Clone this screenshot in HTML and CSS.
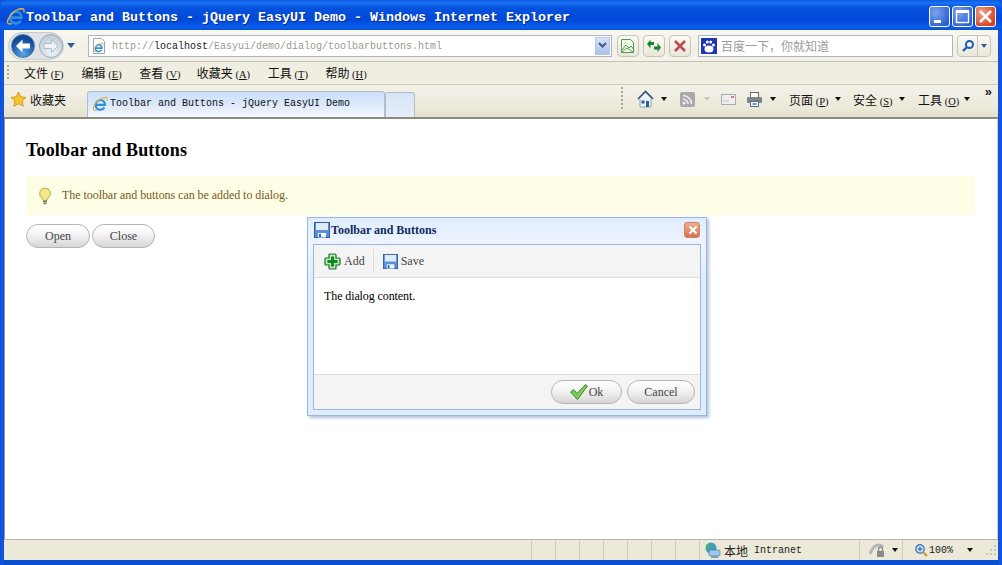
FILE: index.html
```html
<!DOCTYPE html>
<html lang="zh">
<head>
<meta charset="utf-8">
<title>Toolbar and Buttons - jQuery EasyUI Demo</title>
<link rel="stylesheet" href="styles.css">
</head>
<body>
<div class="window">
  <svg class="defs" width="0" height="0">
    <defs>
      <symbol id="ie" viewBox="0 0 18 18">
        <path d="M5 10h9.500c0-3.200-2.200-5.500-5-5.500S4 7 4 10.200s2.400 5.300 5.400 5.300c2 0 3.600-1 4.500-2.600" fill="none" stroke="#2f8fdc" stroke-width="2.500"/>
        <path d="M15.500 1.800C11.500 .8 4.500 5.500 2 11.500c-1.200 3.200-.5 5.500 3.500 4.200" fill="none" stroke="#d9b64a" stroke-width="1.300"/>
        <path d="M13 2.200c3-1.400 4.600-.6 4 2.800" fill="none" stroke="#d9b64a" stroke-width="1.300"/>
      </symbol>
      <symbol id="floppy" viewBox="0 0 16 16">
        <rect x="0.500" y="0.500" width="15" height="15" fill="#5b8fd6" stroke="#2b5ea8"/>
        <rect x="2" y="1" width="12" height="7" fill="#dfeafa"/>
        <rect x="4" y="11" width="8" height="4.500" fill="#f3f6fb"/>
        <rect x="5" y="12" width="2" height="3" fill="#2b5ea8"/>
      </symbol>
    </defs>
  </svg>

  <header class="titlebar">
    <svg class="ie-icon" width="19" height="19" viewBox="0 0 18 18"><use href="#ie"/></svg>
    <div class="title-text">Toolbar and Buttons - jQuery EasyUI Demo - Windows Internet Explorer</div>
    <div class="winbtns">
      <div class="winbtn"><svg width="21" height="21" viewBox="0 0 21 21"><rect x="5" y="14" width="7" height="3" fill="#fff"/></svg></div>
      <div class="winbtn"><svg width="21" height="21" viewBox="0 0 21 21"><rect x="4.500" y="5.500" width="12" height="11" fill="none" stroke="#fff" stroke-width="1.400"/><rect x="4" y="4" width="13" height="3" fill="#fff"/></svg></div>
      <div class="winbtn close"><svg width="21" height="21" viewBox="0 0 21 21"><path d="M5 5l11 11M16 5L5 16" stroke="#fff" stroke-width="2.600"/></svg></div>
    </div>
  </header>

  <div class="frame">
    <div class="addressbar">
      <div class="nav">
        <div class="capsule">
          <div class="nav-back"><svg width="20" height="20" viewBox="0 0 20 20"><path d="M3 10l6.500-6.500v4H17v5H9.500v4z" fill="#fff"/></svg></div>
          <div class="nav-fwd"><svg width="20" height="20" viewBox="0 0 20 20"><path d="M17 10l-6.500-6.500v4H3v5h7.500v4z" fill="#eef2f6" stroke="#9fb0c0" stroke-width=".8"/></svg></div>
        </div>
        <div class="nav-drop"></div>
      </div>
      <div class="urlbox">
        <svg class="page-icon" width="16" height="16" viewBox="0 0 16 16"><path d="M2.500 .5h8l3 3v12h-11z" fill="#fff" stroke="#9aa5b1"/><use href="#ie" x="2" y="4" width="11" height="11"/></svg>
        <div class="url">http://<b>localhost</b>/Easyui/demo/dialog/toolbarbuttons.html</div>
        <div class="url-drop"><svg width="9" height="7" viewBox="0 0 9 7"><path d="M1 1l3.500 3.500L8 1" fill="none" stroke="#3a5a8c" stroke-width="2"/></svg></div>
      </div>
      <div class="tool-btn"><svg width="16" height="16" viewBox="0 0 16 16"><path d="M1.500 1.500h9l3 3v10h-12z" fill="#f2fae9" stroke="#4f9a55"/><path d="M2 12l4-5 3 3 2-2 3 4M2 14l5-4 6 4" fill="none" stroke="#4f9a55"/></svg></div>
      <div class="tool-btn"><svg width="16" height="16" viewBox="0 0 16 16"><path d="M1 6l3.500-4.500v2.500H8v3H4.500v3.500z" fill="#1e7f2e"/><path d="M15 9.500l-3.500 4.500v-2.500H8v-3h3.500V5z" fill="#1e7f2e"/></svg></div>
      <div class="tool-btn"><svg width="14" height="14" viewBox="0 0 14 14"><path d="M2 2l10 10M12 2L2 12" stroke="#bd4a4a" stroke-width="2.600"/></svg></div>
      <div class="searchbox">
        <div class="paw"><svg width="14" height="14" viewBox="0 0 14 14"><ellipse cx="7" cy="10" rx="4.500" ry="3.500" fill="#fff"/><circle cx="2.500" cy="6" r="1.500" fill="#fff"/><circle cx="5.300" cy="3" r="1.500" fill="#fff"/><circle cx="8.700" cy="3" r="1.500" fill="#fff"/><circle cx="11.500" cy="6" r="1.500" fill="#fff"/></svg></div>
        <div class="search-ph">百度一下，你就知道</div>
      </div>
      <div class="search-btn">
        <div class="search-go"><svg width="14" height="14" viewBox="0 0 14 14"><circle cx="8.500" cy="5.500" r="3.500" fill="none" stroke="#1f5fb8" stroke-width="2"/><path d="M6 8l-4 4" stroke="#1f5fb8" stroke-width="2.400"/></svg></div>
        <div class="search-drop"></div>
      </div>
    </div>

    <nav class="menubar">
      <div class="grip"></div>
      <span class="menu">文件 <span class="key">(<u>F</u>)</span></span><span class="menu">编辑 <span class="key">(<u>E</u>)</span></span><span class="menu">查看 <span class="key">(<u>V</u>)</span></span><span class="menu">收藏夹 <span class="key">(<u>A</u>)</span></span><span class="menu">工具 <span class="key">(<u>T</u>)</span></span><span class="menu">帮助 <span class="key">(<u>H</u>)</span></span>
    </nav>

    <div class="tabbar">
      <div class="favs">
        <svg width="17" height="17" viewBox="0 0 17 17"><path d="M8.500 1l2.300 4.800 5.200.7-3.800 3.600 1 5.200-4.700-2.600-4.700 2.600 1-5.200L1 6.500l5.200-.7z" fill="#f6c22f" stroke="#d08a16" stroke-width=".8"/></svg>
        <span>收藏夹</span>
      </div>
      <div class="tab">
        <svg width="16" height="16" viewBox="0 0 18 18"><use href="#ie"/></svg>
        <span>Toolbar and Buttons - jQuery EasyUI Demo</span>
      </div>
      <div class="newtab"></div>
      <div class="cmds">
        <div class="cmd-grip"></div>
        <svg width="17" height="18" viewBox="0 0 17 18"><path d="M8.500 1.500L1 9h2v8h11V9h2z" fill="#eef3f8"/><path d="M1 9l7.500-7.500L16 9" fill="none" stroke="#2c4f80" stroke-width="1.600"/><path d="M3 9v8h11V9" fill="none" stroke="#8fa3b8"/><rect x="9" y="11" width="3" height="6" fill="#2c5f94"/><rect x="4.500" y="10.500" width="3" height="3" fill="#2c5f94"/></svg>
        <i class="caret"></i>
        <svg class="feed" width="15" height="15" viewBox="0 0 15 15"><rect width="15" height="15" rx="2" fill="#a9a9a9"/><circle cx="4" cy="11" r="1.600" fill="#eee"/><path d="M3 7a5 5 0 0 1 5 5M3 3.500A8.500 8.500 0 0 1 11.500 12" fill="none" stroke="#eee" stroke-width="1.600"/></svg>
        <i class="caret faint"></i>
        <svg class="mail" width="15" height="11" viewBox="0 0 15 11"><rect x=".5" y=".5" width="14" height="10" fill="#eceef0" stroke="#a7acb2"/><rect x="10" y="2" width="3" height="2" fill="#d97a7a"/><path d="M2 7h6" stroke="#b9bdc2"/></svg>
        <svg class="printer" width="17" height="17" viewBox="0 0 17 17"><rect x="4.500" y="1.500" width="8" height="5" fill="#fff" stroke="#666"/><rect x="1" y="6" width="15" height="6" rx="1" fill="#7f858b"/><rect x="4.500" y="10.500" width="8" height="5" fill="#fff" stroke="#4f6d8f"/><rect x="6.500" y="12" width="4" height="2" fill="#5f9bc9"/></svg>
        <i class="caret"></i>
        <span class="cmd page">页面 <span class="key">(<u>P</u>)</span></span><i class="caret"></i>
        <span class="cmd">安全 <span class="key">(<u>S</u>)</span></span><i class="caret"></i>
        <span class="cmd last">工具 <span class="key">(<u>O</u>)</span></span><i class="caret"></i>
      </div>
      <div class="chevron">»</div>
    </div>

    <main class="content">
      <h2 class="heading">Toolbar and Buttons</h2>
      <div class="note">
        <svg width="16" height="18" viewBox="0 0 16 18"><path d="M8 1a5.500 5.500 0 0 0-3 10c.7.600.8 1.300 1 2.500h4c.2-1.200.3-1.900 1-2.500A5.500 5.500 0 0 0 8 1z" fill="#f7e98a" stroke="#b5a84e"/><path d="M6 14.500h4M6.500 16.500h3" stroke="#777" stroke-width="1.400"/></svg>
        <span>The toolbar and buttons can be added to dialog.</span>
      </div>
      <div class="actions">
        <a class="btn open">Open</a>
        <a class="btn close-btn">Close</a>
      </div>

      <section class="dialog">
        <div class="dlg-head">
          <svg width="16" height="16" viewBox="0 0 16 16"><use href="#floppy"/></svg>
          <span class="dlg-title">Toolbar and Buttons</span>
          <div class="dlg-close"><svg width="10" height="10" viewBox="0 0 10 10"><path d="M1.500 1.500l7 7M8.500 1.500l-7 7" stroke="#fff" stroke-width="2"/></svg></div>
        </div>
        <div class="dlg-inner">
          <div class="dlg-toolbar">
            <div class="dlg-tool first">
              <svg width="17" height="17" viewBox="0 0 17 17"><path d="M6 1h5a1 1 0 0 1 1 1v3h3a1 1 0 0 1 1 1v5a1 1 0 0 1-1 1h-3v3a1 1 0 0 1-1 1H6a1 1 0 0 1-1-1v-3H2a1 1 0 0 1-1-1V6a1 1 0 0 1 1-1h3V2a1 1 0 0 1 1-1z" fill="#bfe8b4" stroke="#16702a" stroke-width="1.200"/><path d="M7 3.500h3V7h3.500v3H10v3.500H7V10H3.500V7H7z" fill="#0f8a20"/></svg>
              <span>Add</span>
            </div>
            <div class="dlg-sep"></div>
            <div class="dlg-tool">
              <svg width="15" height="15" viewBox="0 0 16 16"><use href="#floppy"/></svg>
              <span>Save</span>
            </div>
          </div>
          <div class="dlg-body">The dialog content.</div>
          <div class="dlg-foot">
            <a class="btn ok"><svg width="18" height="16" viewBox="0 0 18 16"><path d="M.5 8L3.500 5.500 7 9.500 15.500.5 17.500 2 7.500 15.500z" fill="#7ccb55" stroke="#3b8a3a"/></svg>Ok</a>
            <a class="btn cancel">Cancel</a>
          </div>
        </div>
      </section>
    </main>

    <footer class="statusbar">
      <div class="cells"><i></i><i></i><i></i><i></i><i></i><i></i><i></i><i></i></div>
      <div class="zone">
        <svg width="17" height="16" viewBox="0 0 17 16"><circle cx="7" cy="6" r="5.500" fill="#3f9bc9"/><path d="M3 2c2 0 3 2 2 4S2 8 2 6M8 1c2 1 3 3 1 4" fill="#58b157"/><rect x="5" y="8" width="11" height="6" rx="1" fill="#9fc7e8" stroke="#3f6f9e" stroke-width=".6"/><rect x="7" y="14" width="7" height="2" fill="#7d9cba"/></svg>
        <span class="zone-cn">本地</span> <span class="zone-en">Intranet</span>
      </div>
      <div class="protect">
        <svg width="18" height="16" viewBox="0 0 18 16"><path d="M1 12c2-6 5-9 9-9 2 0 3 1 4 2" fill="none" stroke="#b4b9be" stroke-width="3"/><rect x="8" y="9" width="7" height="6" fill="#8a8a8a"/><path d="M9.500 9V7a2 2 0 0 1 4 0v2" fill="none" stroke="#8a8a8a" stroke-width="1.300"/></svg>
        <i class="caret dark"></i>
      </div>
      <div class="zoom">
        <svg width="14" height="14" viewBox="0 0 14 14"><circle cx="6" cy="6" r="4.200" fill="#c6dcf3" stroke="#4a7fba" stroke-width="1.400"/><path d="M4 6h4M6 4v4" stroke="#2450a0"/><path d="M9 9l4 4" stroke="#c9952e" stroke-width="2"/></svg>
        <span>100%</span>
        <i class="caret dark zoom-c"></i>
      </div>
      <div class="resize"><svg width="11" height="11" viewBox="0 0 11 11"><path d="M9 1h2v2H9zM5 5h2v2H5zM9 5h2v2H9zM1 9h2v2H1zM5 9h2v2H5zM9 9h2v2H9z" fill="#c9c6b4"/></svg></div>
    </footer>
  </div>
</div>
</body>
</html>
```

FILE: styles.css
```css
* { box-sizing: border-box; }
html, body { margin: 0; height: 100%; overflow: hidden; }
body { width: 1002px; height: 565px; background: #fff; font-family: "Liberation Serif", "Noto Sans CJK SC", serif; }
.window { width: 1002px; height: 565px; display: flex; flex-direction: column; background: linear-gradient(90deg, #0a4fd0 0, #1258e6 2px, #0a4fd0 4px, #0a4fd0 998px, #1258e6 1000px, #0a4fd0 1002px); }
.defs { position: absolute; }

.titlebar { height: 30px; flex: none; display: flex; align-items: center; padding: 0 6px 0 6px; border-radius: 7px 7px 0 0;
  background: linear-gradient(#0a5be0 0, #1a70f4 3px, #0552dc 8px, #0148d8 20px, #0a5eee 27px, #0450d0 30px); }
.ie-icon { flex: none; margin-top: 3px; }
.title-text { margin-left: 1px; margin-top: 5px; flex: 1; color: #fff; font: bold 13.33px "Liberation Mono", monospace; white-space: nowrap; text-shadow: 1px 1px 0 #0a2d8c; }
.winbtns { display: flex; gap: 2px; margin-top: 3px; }
.winbtn { width: 21px; height: 21px; border: 1px solid #fff; border-radius: 3px; background: radial-gradient(circle at 30% 30%, #7ea4ee, #2b5fd6 80%); }
.winbtn svg { display: block; margin: -1px; }
.winbtn.close { background: radial-gradient(circle at 30% 30%, #f0a088, #d6401c 80%); }

.frame { flex: 1; min-height: 0; display: flex; flex-direction: column; margin: 0 4px 5px 4px; background: #ece9d8; }

.addressbar { height: 32px; flex: none; display: flex; align-items: center; padding-left: 4px; border-bottom: 1px solid #c2c1b4; background: linear-gradient(#f8f7f1, #f2f0e6 60%, #f4f2e9); }
.nav { display: flex; align-items: center; width: 78px; flex: none; }
.capsule { width: 56px; height: 28px; flex: none; display: flex; align-items: center; gap: 4px; padding-left: 2px; border-radius: 14px; background: #dfe2e6; border: 1px solid #c9ccd0; }
.nav-back { width: 24px; height: 24px; border-radius: 50%; background: radial-gradient(circle at 50% 85%, #5aa6ea, #0f4a98 68%); border: 1px solid #547ba8; display: flex; align-items: center; justify-content: center; flex: none; }
.nav-fwd { width: 24px; height: 24px; border-radius: 50%; background: radial-gradient(circle at 50% 80%, #eef3f8, #b5c2d0); border: 1px solid #9aa9b9; display: flex; align-items: center; justify-content: center; flex: none; }
.nav-drop { width: 0; height: 0; margin-left: 3px; border: 4.500px solid transparent; border-top: 5px solid #2a5d9a; border-bottom: 0; }
.urlbox { width: 524px; height: 22px; margin-left: 2px; margin-right: 1px; flex: none; display: flex; align-items: center; background: #fff; border: 1px solid #a7b6c8; padding-left: 2px; }
.page-icon { flex: none; }
.url { flex: 1; margin-left: 5px; margin-top: 2px; font: 10px "Liberation Mono", monospace; color: #9a9a90; white-space: nowrap; }
.url b { color: #222; font-weight: normal; }
.url-drop { width: 15px; height: 18px; margin-right: 1px; display: flex; align-items: center; justify-content: center; background: linear-gradient(#d8e4f6, #aac2e8); border: 1px solid #b4c6e2; }
.tool-btn { width: 22px; height: 22px; margin-left: 4px; flex: none; display: flex; align-items: center; justify-content: center; border: 1px solid #c6c5b8; border-radius: 4px; background: linear-gradient(#fbfaf5, #e9e7da); }
.searchbox { width: 255px; height: 22px; margin-left: 7px; flex: none; display: flex; align-items: center; gap: 4px; background: #fff; border: 1px solid #a7b6c8; padding-left: 2px; }
.paw { width: 16px; height: 16px; background: #1f35b8; display: flex; align-items: center; justify-content: center; flex: none; }
.search-ph { font: 12px "Noto Sans CJK SC", sans-serif; color: #9c9c9c; white-space: nowrap; }
.search-btn { display: flex; margin-left: 4px; height: 22px; width: 34px; flex: none; border: 1px solid #c6c5b8; border-radius: 4px; background: linear-gradient(#fbfaf5, #e9e7da); }
.search-go { flex: 1; display: flex; align-items: center; justify-content: center; border-right: 1px solid #c8c7b8; }
.search-drop { width: 12px; position: relative; }
.search-drop::after { content: ""; position: absolute; left: 3px; top: 8px; border: 3px solid transparent; border-top: 4px solid #3a5f9a; border-bottom: 0; }

.menubar { height: 23px; flex: none; display: flex; align-items: center; padding: 0 0 2px 3px; background: #f0eee1; border-bottom: 1px solid #cfccbc; }
.grip { width: 2px; height: 14px; margin-right: 15px; background: repeating-linear-gradient(#a9a797 0 2px, transparent 2px 4px); }
.menu { font: 12px "Noto Sans CJK SC", sans-serif; color: #111; margin-right: 17px; white-space: nowrap; width: 40.600px; }
.menu:nth-of-type(4) { width: 54px; }
.key { font: 10.500px "Liberation Serif", serif; }

.tabbar { height: 34px; flex: none; display: flex; align-items: flex-end; background: linear-gradient(#f3f2e8, #ece9da 70%, #e4e1cf); border-bottom: 2px solid #8c8b80; position: relative; }
.favs { width: 83px; align-self: center; display: flex; align-items: center; gap: 3px; padding: 0 0 4px 6px; font: 12px "Noto Sans CJK SC", sans-serif; color: #111; flex: none; }
.tab { width: 298px; height: 26px; display: flex; align-items: center; gap: 2px; padding: 0 0 2px 4px; flex: none; border: 1px solid #b3bdc9; border-bottom: 0; border-radius: 3px 3px 0 0; background: linear-gradient(#c9defa, #dfeafb 55%, #f5f7fa); font: 10px "Liberation Mono", monospace; color: #111; white-space: nowrap; }
.newtab { width: 30px; height: 25px; flex: none; border: 1px solid #b3bdc9; border-bottom: 0; border-radius: 3px 3px 0 0; background: linear-gradient(#d6e4f6, #e6eefa); }
.cmds { margin-left: 206px; height: 32px; padding-bottom: 4px; display: flex; align-items: center; flex: none; font: 12px "Noto Sans CJK SC", sans-serif; color: #111; white-space: nowrap; }
.cmd-grip { width: 2px; height: 24px; margin-right: 14px; background: repeating-linear-gradient(#a9a797 0 2px, transparent 2px 4px); }
.caret { display: block; width: 0; height: 0; margin-left: 7px; flex: none; border: 3px solid transparent; border-top: 4px solid #111; border-bottom: 0; }
.caret.faint { border-top-color: #c8c6b8; margin-left: 9px; }
.feed { margin-left: 13px; }
.mail { margin-left: 11px; }
.printer { margin-left: 10px; }
.cmd { width: 41px; margin-left: 12px; }
.cmd.page { margin-left: 13px; }
.cmd.last { margin-left: 13px; }
.cmd + .caret { margin-left: 5px; }
.chevron { position: absolute; right: 6px; top: 0; font: bold 13px "Liberation Sans", sans-serif; color: #222; line-height: 14px; }

.content { flex: 1; min-height: 0; background: #fff; padding: 21px 22px 0 21px; position: relative; border-left: 1px solid #8b98a8; border-right: 1px solid #ccd; }
.heading { margin: 0; font: bold 18px/20px "Liberation Serif", serif; letter-spacing: .16px; color: #000; }
.note { margin-top: 16px; height: 39px; display: flex; align-items: center; gap: 9px; padding-left: 11px; background: #fefee6; font-size: 12px; letter-spacing: -.05px; color: #7a5a1e; }
.actions { display: flex; gap: 2px; margin-top: 9px; }
.btn { display: inline-flex; align-items: center; justify-content: center; height: 24px; border: 1px solid #b4b4b4; border-radius: 12px; background: linear-gradient(#fff, #f5f5f5 40%, #d6d6d6); font-size: 12px; color: #444; }
.open { width: 64px; }
.close-btn { width: 63px; }

.dialog { position: absolute; left: 302px; top: 98px; width: 400px; height: 199px; background: linear-gradient(#e0ecff, #eff5ff 28px, #e0ecff 60px); border: 1px solid #95b8e7; box-shadow: 2px 2px 3px #b3c2d8; padding: 0 5px 5px; display: flex; flex-direction: column; }
.dlg-head { height: 26px; flex: none; display: flex; align-items: center; padding-bottom: 2px; }
.dlg-head svg:first-child { margin-left: 1px; }
.dlg-title { margin-left: 1px; flex: 1; font: bold 12px "Liberation Serif", serif; color: #0e2d5f; }
.dlg-close { width: 16px; height: 16px; margin-right: 1px; border-radius: 3px; background: linear-gradient(#f0ad94, #d6744e); border: 1px solid #c9855f; display: flex; align-items: center; justify-content: center; }
.dlg-inner { flex: 1; min-height: 0; display: flex; flex-direction: column; border: 1px solid #95b8e7; background: #fff; }
.dlg-toolbar { height: 33px; flex: none; display: flex; align-items: center; background: #f4f4f4; border-bottom: 1px solid #dddddd; padding-left: 10px; }
.dlg-tool { display: flex; align-items: center; gap: 3px; font-size: 12px; color: #444; }
.dlg-sep { width: 1px; height: 24px; background: #ddd; margin: 0 9px 0 8px; }
.dlg-body { flex: 1; padding: 11px 10px; font-size: 12px; letter-spacing: -.1px; color: #000; }
.dlg-foot { height: 35px; flex: none; display: flex; align-items: center; justify-content: flex-end; gap: 5px; padding-right: 5px; background: #f4f4f4; border-top: 1px solid #dddddd; }
.ok { width: 71px; gap: 1px; }
.cancel { width: 68px; }

.statusbar { height: 21px; flex: none; display: flex; align-items: center; background: #ece9d8; border-top: 1px solid #b8b6a6; font: 11px "Noto Sans CJK SC", sans-serif; color: #222; }
.cells { display: flex; margin-left: 527px; height: 100%; }
.cells i { display: block; width: 24px; border-left: 1px solid #d0cdbc; }
.zone { width: 156px; margin-left: -19px; flex: none; display: flex; align-items: center; gap: 3px; font-size: 12px; white-space: nowrap; border-right: 1px solid #d0cdbc; height: 100%; }
.zone-en { font: 10px "Liberation Mono", monospace; margin-left: 3px; }
.protect { width: 43px; height: 100%; flex: none; display: flex; align-items: center; padding-left: 9px; border-right: 1px solid #d0cdbc; }
.caret.dark { margin-left: 5px; }
.zoom { display: flex; align-items: center; gap: 1px; margin-left: 11px; font: 10px "Liberation Mono", monospace; flex: none; }
.caret.zoom-c { margin-left: 13px; }
.resize { flex: 1; display: flex; justify-content: flex-end; align-items: flex-end; padding: 0 2px 1px 0; }
```
